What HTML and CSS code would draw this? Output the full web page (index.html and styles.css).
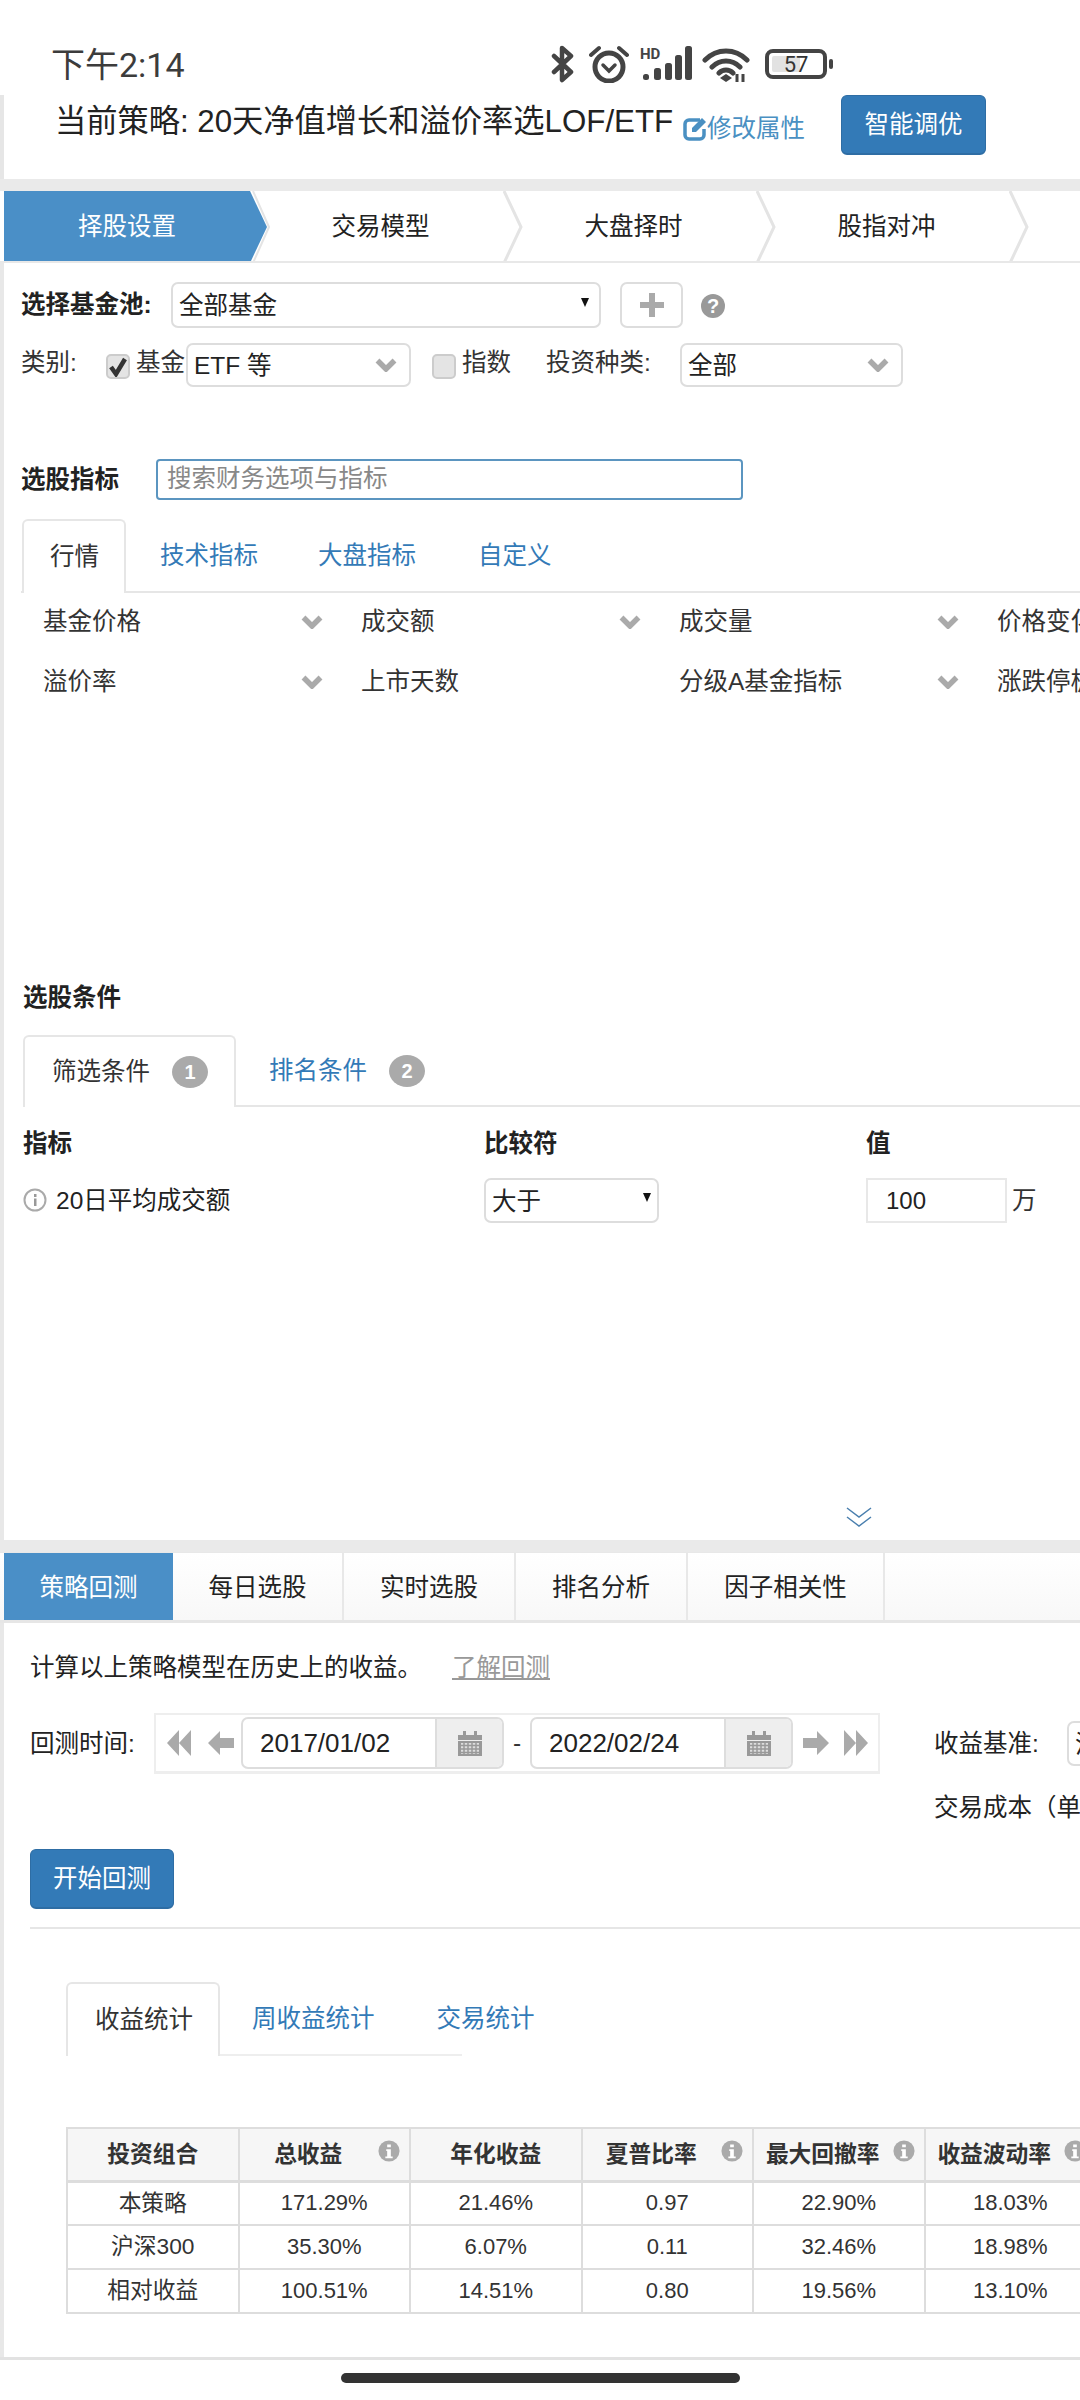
FILE: index.html
```html
<!DOCTYPE html>
<html lang="zh-CN">
<head>
<meta charset="utf-8">
<title>策略回测</title>
<link rel="stylesheet" href="styles.css">
</head>
<body>
<svg class="defs" width="0" height="0">
  <symbol id="chev" viewBox="0 0 22 14"><path d="M2.500 2.500 11 11 19.500 2.500" fill="none" stroke="#aaa" stroke-width="5.500"/></symbol>
  <symbol id="info" viewBox="0 0 24 24"><circle cx="12" cy="12" r="11.500" fill="#aaa"/><path d="M10 5h4v3h-4zM9 10h5v8h2v2H8v-2h2v-6H9z" fill="#fff"/></symbol>
  <symbol id="cal" viewBox="0 0 24 26"><path d="M0 5h5V1h3v4h8V1h3v4h5v5H0z" fill="#999"/><path d="M0 11h24v15H0z" fill="#999"/><path d="M3 13h18v11H3z" fill="#ddd"/><path d="M3 15.500h18M3 19h18M3 22.500h18M6 13v11M10 13v11M14 13v11M18 13v11" stroke="#999" stroke-width="1.500"/></symbol>
</svg>
<div class="page">
  <header class="status">
    <span class="time">下午2:14</span>
    <div class="status-icons">
      <svg class="i-bt" width="24" height="38" viewBox="0 0 24 38"><path d="M3 11 20 27 11 35V3l9 8L3 27" fill="none" stroke="#444" stroke-width="4.500" stroke-linejoin="round" stroke-linecap="round"/></svg>
      <svg class="i-alarm" width="40" height="38" viewBox="0 0 40 38"><circle cx="20" cy="22" r="14" fill="none" stroke="#444" stroke-width="5"/><path d="M14 20l6 6 6-6" fill="none" stroke="#444" stroke-width="3.500" stroke-linecap="round"/><path d="M2 10 10 3M38 10 30 3" stroke="#444" stroke-width="4" stroke-linecap="round"/></svg>
      <svg class="i-sig" width="52" height="36" viewBox="0 0 52 36"><text x="0" y="14" class="hd">HD</text><rect x="3" y="29" width="6" height="6" rx="2.500" fill="#444"/><rect x="14" y="23" width="7" height="12" rx="2.500" fill="#444"/><rect x="25" y="18" width="7" height="17" rx="2.500" fill="#444"/><rect x="35" y="10" width="7" height="25" rx="2.500" fill="#444"/><rect x="45" y="1" width="7" height="34" rx="2.500" fill="#444"/></svg>
      <svg class="i-wifi" width="48" height="36" viewBox="0 0 48 36"><path d="M3 13C15 1 33 1 45 13M10 20C18 12 30 12 38 20M17 26C21 22 27 22 31 26" fill="none" stroke="#444" stroke-width="5" stroke-linecap="round"/><path d="M18 31l6-4 6 4-6 4z" fill="#444"/><path d="M35 27v8M41 27v8" stroke="#444" stroke-width="3"/></svg>
      <svg class="i-bat" width="68" height="30" viewBox="0 0 68 30"><rect x="2" y="2" width="58" height="26" rx="6" fill="none" stroke="#444" stroke-width="4"/><rect x="7" y="7" width="28" height="16" rx="2" fill="#e2e2e2"/><text x="31" y="23" class="bat">57</text><rect x="64" y="10" width="4" height="10" rx="2" fill="#444"/></svg>
    </div>
  </header>

  <section class="head-bar">
    <h1 class="title">当前策略: 20天净值增长和溢价率选LOF/ETF</h1>
    <a class="edit">
      <svg width="24" height="24" viewBox="0 0 24 24"><path d="M17 3H6a4 4 0 0 0-4 4v11a4 4 0 0 0 4 4h11a4 4 0 0 0 4-4v-6" fill="none" stroke="#4a90c2" stroke-width="3.500"/><path d="M9 11 19 1l4 4-10 10H9z" fill="#4a90c2"/></svg>修改属性</a>
    <button class="btn btn-tune">智能调优</button>
  </section>

  <div class="band"></div>

  <nav class="steps">
    <div class="step active">择股设置<svg class="step-tip" width="20" height="72" viewBox="0 0 20 72"><path d="M0 0 17 36 0 72z" fill="#4a8fc7"/><path d="M3 0 19 36 3 72" fill="none" stroke="#e4e4e4" stroke-width="2"/></svg></div>
    <div class="step">交易模型<svg class="step-tip" width="20" height="72" viewBox="0 0 20 72"><path d="M1 0 18 36 1 72" fill="none" stroke="#e4e4e4" stroke-width="3"/></svg></div>
    <div class="step">大盘择时<svg class="step-tip" width="20" height="72" viewBox="0 0 20 72"><path d="M1 0 18 36 1 72" fill="none" stroke="#e4e4e4" stroke-width="3"/></svg></div>
    <div class="step">股指对冲<svg class="step-tip" width="20" height="72" viewBox="0 0 20 72"><path d="M1 0 18 36 1 72" fill="none" stroke="#e4e4e4" stroke-width="3"/></svg></div>
  </nav>

  <section class="panel">
    <div class="row row-pool">
      <strong class="lbl-pool">选择基金池:</strong>
      <div class="sel sel-pool"><span>全部基金</span><i class="caret"></i></div>
      <button class="plus"><svg width="24" height="24" viewBox="0 0 24 24"><path d="M9 0h6v9h9v6h-9v9H9v-9H0V9h9z" fill="#aaa"/></svg></button>
      <svg class="qmark" width="24" height="24" viewBox="0 0 24 24"><circle cx="12" cy="12" r="12" fill="#999"/><text x="12" y="19" class="q">?</text></svg>
    </div>
    <div class="row row-kind">
      <span class="lbl-kind">类别:</span>
      <span class="check on"><svg width="20" height="20" viewBox="0 0 20 20"><path d="M3 10l5 7L17 2" fill="none" stroke="#333" stroke-width="4.500"/></svg></span>
      <span class="kind-a">基金</span>
      <div class="sel sel-etf"><span>ETF 等</span><svg class="chev"><use href="#chev"/></svg></div>
      <span class="check"></span>
      <span class="kind-b">指数</span>
      <span class="kind-c">投资种类:</span>
      <div class="sel sel-all"><span>全部</span><svg class="chev"><use href="#chev"/></svg></div>
    </div>
    <div class="row row-search">
      <strong class="lbl-search">选股指标</strong>
      <div class="search">搜索财务选项与指标</div>
    </div>
    <div class="tabs tabs-a">
      <a class="tab cur">行情</a><a class="tab">技术指标</a><a class="tab">大盘指标</a><a class="tab">自定义</a>
    </div>
    <div class="factor-grid">
      <div class="factor"><span>基金价格</span><svg class="chev"><use href="#chev"/></svg></div>
      <div class="factor"><span>成交额</span><svg class="chev"><use href="#chev"/></svg></div>
      <div class="factor"><span>成交量</span><svg class="chev"><use href="#chev"/></svg></div>
      <div class="factor"><span>价格变化</span></div>
      <div class="factor"><span>溢价率</span><svg class="chev"><use href="#chev"/></svg></div>
      <div class="factor"><span>上市天数</span></div>
      <div class="factor"><span>分级A基金指标</span><svg class="chev"><use href="#chev"/></svg></div>
      <div class="factor"><span>涨跌停板</span></div>
    </div>
  </section>

  <section class="panel panel-cond">
    <strong class="cond-title">选股条件</strong>
    <div class="tabs tabs-b">
      <a class="tab cur">筛选条件<b class="badge">1</b></a><a class="tab">排名条件<b class="badge">2</b></a>
    </div>
    <div class="cond-row cond-head">
      <strong class="c1">指标</strong><strong class="c2">比较符</strong><strong class="c3">值</strong>
    </div>
    <div class="cond-row cond-body">
      <div class="c1 c1-body"><svg width="24" height="24" viewBox="0 0 24 24"><circle cx="12" cy="12" r="10.500" fill="none" stroke="#aaa" stroke-width="2"/><path d="M11 6h2.500v3H11zM11 10.500h2.500V18H11z" fill="#999"/></svg>20日平均成交额</div>
      <div class="c2"><div class="sel sel-cmp"><span>大于</span><i class="caret"></i></div></div>
      <div class="c3 c3-body"><div class="num">100</div><span>万</span></div>
    </div>
    <svg class="more" width="26" height="20" viewBox="0 0 26 20"><path d="M1 1 13 10 25 1M1 10 13 19 25 10" fill="none" stroke="#4a7fae" stroke-width="1.500"/></svg>
  </section>

  <div class="band"></div>

  <nav class="btabs">
    <a class="btab active">策略回测</a><a class="btab">每日选股</a><a class="btab">实时选股</a><a class="btab">排名分析</a><a class="btab wide">因子相关性</a><span class="btab-rest"></span>
  </nav>

  <section class="panel panel-back">
    <p class="intro">计算以上策略模型在历史上的收益。<a class="learn">了解回测</a></p>
    <div class="date-row">
      <span class="date-lbl">回测时间:</span>
      <div class="date-box">
        <svg class="arrow" width="24" height="26" viewBox="0 0 24 26"><path d="M12 0v26L0 13zM24 0v26L12 13z" fill="#aaa"/></svg>
        <svg class="arrow a2" width="26" height="24" viewBox="0 0 26 24"><path d="M12 0 0 12l12 12v-7h14V7H12z" fill="#aaa"/></svg>
        <div class="date"><span class="date-val">2017/01/02</span><span class="date-cal"><svg width="24" height="26"><use href="#cal"/></svg></span></div>
        <span class="dash">-</span>
        <div class="date"><span class="date-val">2022/02/24</span><span class="date-cal"><svg width="24" height="26"><use href="#cal"/></svg></span></div>
        <svg class="arrow a3" width="26" height="24" viewBox="0 0 26 24"><path d="M14 0l12 12-12 12v-7H0V7h14z" fill="#aaa"/></svg>
        <svg class="arrow a4" width="24" height="26" viewBox="0 0 24 26"><path d="M0 0v26l12-13zM12 0v26l12-13z" fill="#aaa"/></svg>
      </div>
      <span class="base-lbl">收益基准:</span>
      <div class="sel sel-base"><span>沪深300</span></div>
    </div>
    <div class="cost">交易成本（单边）</div>
    <button class="btn btn-run">开始回测</button>
    <hr class="rule">
    <div class="tabs tabs-c">
      <a class="tab cur">收益统计</a><a class="tab">周收益统计</a><a class="tab">交易统计</a>
    </div>
    <table class="stats">
      <thead>
        <tr>
          <th>投资组合</th>
          <th class="has-i"><span>总收益</span><svg class="th-i"><use href="#info"/></svg></th>
          <th>年化收益</th>
          <th class="has-i"><span>夏普比率</span><svg class="th-i"><use href="#info"/></svg></th>
          <th class="has-i"><span>最大回撤率</span><svg class="th-i"><use href="#info"/></svg></th>
          <th class="has-i"><span>收益波动率</span><svg class="th-i"><use href="#info"/></svg></th>
        </tr>
      </thead>
      <tbody>
        <tr><td>本策略</td><td>171.29%</td><td>21.46%</td><td>0.97</td><td>22.90%</td><td>18.03%</td></tr>
        <tr><td>沪深300</td><td>35.30%</td><td>6.07%</td><td>0.11</td><td>32.46%</td><td>18.98%</td></tr>
        <tr><td>相对收益</td><td>100.51%</td><td>14.51%</td><td>0.80</td><td>19.56%</td><td>13.10%</td></tr>
      </tbody>
    </table>
  </section>

  <footer class="foot"><span class="home"></span></footer>
</div>
</body>
</html>
```

FILE: styles.css
```css
* { box-sizing: border-box; }
html, body { margin: 0; padding: 0; background: #fff; }
body {
  width: 1080px;
  height: 2400px;
  overflow: hidden;
  font-family: "Liberation Sans", "Noto Sans CJK SC", sans-serif;
  font-size: 24.5px;
  line-height: 1.2;
  color: #333;
}
a { color: #337ab7; text-decoration: none; }
.defs { position: absolute; }
.page { width: 1080px; height: 2400px; overflow: hidden; }

.status { height: 95px; display: flex; align-items: flex-start; justify-content: space-between; padding: 44px 247px 0 51px; }
.time { font-family: "Roboto", "Noto Sans CJK SC", sans-serif; font-size: 34px; line-height: 42px; color: #3c3c3c; white-space: nowrap; }
.status-icons { display: flex; align-items: flex-start; }
.i-bt { margin-top: 1px; }
.i-alarm { margin: 1px 0 0 14px; }
.i-sig { margin: 1px 0 0 11px; }
.i-wifi { margin: 3px 0 0 10px; }
.i-bat { margin: 5px 0 0 15px; }
.hd { font: 700 15px "Roboto", sans-serif; fill: #444; }
.bat { font: 400 22px "Roboto", sans-serif; fill: #333; text-anchor: middle; }
.q { font: 700 20px "Liberation Sans", sans-serif; fill: #fff; text-anchor: middle; }

.head-bar { height: 84px; border-left: 4px solid #e6e6e6; display: flex; align-items: flex-start; padding-left: 51px; }
.title { margin: 8px 0 0; font-size: 31.25px; font-weight: 400; line-height: 38px; color: #222; white-space: nowrap; }
.edit { display: flex; align-items: center; margin: 19px 0 0 10px; color: #4a90c2; font-size: 24.5px; line-height: 30px; }
.btn { display: block; border: 1px solid #2e6da4; border-bottom-width: 2px; border-radius: 6px; background: #337ab7; color: #fff; font: inherit; font-size: 24.5px; padding: 0; }
.btn-tune { width: 145px; height: 60px; margin-left: 36px; }

.band { height: 12px; background: #eaeaea; }
.steps { height: 72px; display: flex; padding-left: 4px; border-bottom: 2px solid #e8e8e8; overflow: hidden; }
.step { position: relative; width: 253px; height: 70px; flex: none; padding-left: 8px; text-align: center; line-height: 72px; color: #222; }
.step:first-child { width: 246px; padding-left: 0; }
.step.active { background: #4a8fc7; color: #fff; }
.step-tip { position: absolute; left: 100%; top: 0; }

.panel { border-left: 4px solid #e8e8e8; padding-left: 17px; }
.row { display: flex; align-items: center; }
.row-pool { padding-top: 19px; height: 65px; }
.lbl-pool { width: 150px; font-weight: 700; color: #222; white-space: nowrap; }
.sel { display: flex; align-items: center; justify-content: space-between; border: 2px solid #ddd; border-radius: 7px; background: #fff; padding: 0 6px; color: #222; flex: none; }
.sel span { margin-top: 2px; }
.sel-pool { width: 430px; height: 46px; padding-right: 10px; }
.caret { width: 0; height: 0; border-left: 4px solid transparent; border-right: 4px solid transparent; border-top: 9px solid #111; margin-top: -6px; }
.plus { width: 63px; height: 46px; margin-left: 19px; border: 2px solid #ddd; border-radius: 7px; background: #fff; padding: 0; display: flex; align-items: center; justify-content: center; flex: none; }
.qmark { margin: 2px 0 0 18px; flex: none; }
.row-kind { height: 44px; margin-top: 15px; }
.lbl-kind { width: 85px; flex: none; margin-top: -4px; }
.check { width: 24px; height: 25px; border: 2px solid #ccc; border-radius: 5px; background: #e4e4e4; display: flex; align-items: center; justify-content: center; flex: none; margin-top: 3px; }
.kind-a { width: 56px; padding-left: 6px; flex: none; margin-top: -4px; white-space: nowrap; }
.sel-etf { width: 225px; height: 44px; margin-right: 21px; padding-right: 12px; }
.kind-b { margin: -4px 0 0 6px; width: 84px; flex: none; }
.kind-c { width: 134px; flex: none; margin-top: -4px; white-space: nowrap; }
.sel-all { width: 223px; height: 44px; padding-right: 12px; }
.chev { width: 22px; height: 14px; flex: none; }
.row-search { height: 41px; margin-top: 72px; }
.lbl-search { width: 135px; font-weight: 700; color: #222; flex: none; }
.search { width: 587px; height: 41px; border: 2px solid #5b95c0; border-radius: 4px; padding: 0 9px; line-height: 35px; color: #888; }
.tabs { display: flex; border-bottom: 2px solid #e6e6e6; }
.tabs-a { margin-top: 19px; height: 74px; padding-left: 1px; }
.tab { display: flex; align-items: center; height: 74px; padding: 0 34px; flex: none; white-space: nowrap; }
.tab.cur { background: #fff; border: 2px solid #e6e6e6; border-bottom: 0; border-radius: 6px 6px 0 0; color: #333; padding: 0 28px; margin-bottom: -2px; }
.tabs-a .tab { padding-left: 30px; padding-right: 30px; }
.tabs-a .tab.cur { width: 104px; padding: 0 0 0 26px; }
.tabs-a .tab:nth-child(2) { padding-left: 34px; padding-right: 30px; }
.tabs-a .tab:nth-child(3) { padding-left: 30px; padding-right: 32px; }
.factor-grid { display: grid; grid-template-columns: repeat(4, 318px); grid-auto-rows: 60px; margin: -1px 0 0 1px; height: 391px; }
.factor { display: flex; align-items: center; justify-content: space-between; padding: 0 17px 0 21px; white-space: nowrap; overflow: hidden; }

.panel-cond { height: 557px; position: relative; padding-left: 19px; }
.cond-title { display: block; font-weight: 700; color: #222; line-height: 30px; }
.tabs-b { margin-top: 22px; height: 72px; }
.tabs-b .tab { height: 72px; padding: 0 33px; }
.tabs-b .tab.cur { width: 213px; padding: 0 0 0 27px; }
.badge { display: inline-block; width: 36px; height: 32px; margin-left: 22px; border-radius: 50%; background: #aaa; color: #fff; text-align: center; font-size: 20px; line-height: 32px; }
.cond-row { display: flex; }
.cond-head { margin-top: 22px; height: 30px; align-items: center; }
.cond-head strong { font-weight: 700; color: #222; }
.c1 { width: 461px; flex: none; }
.c2 { width: 382px; flex: none; }
.c3 { flex: none; }
.cond-body { margin-top: 19px; align-items: center; }
.c1-body { display: flex; align-items: center; gap: 9px; color: #222; white-space: nowrap; }
.sel-cmp { width: 175px; height: 45px; }
.c3-body { display: flex; align-items: center; gap: 5px; }
.num { width: 141px; height: 45px; border: 2px solid #e8e8e8; padding-left: 18px; font-size: 24px; line-height: 41px; color: #222; }
.more { position: absolute; left: 842px; top: 524px; }

.btabs { height: 71px; display: flex; padding-left: 4px; border-bottom: 3px solid #e6e6e6; border-top: 1px solid #e8e8e8; background: linear-gradient(#fff, #f8f8f8); overflow: hidden; }
.btab { width: 172px; flex: none; text-align: center; line-height: 70px; color: #222; border-right: 2px solid #e8e8e8; }
.btab.active { width: 169px; background: #4a8fc7; color: #fff; border-right: 0; }
.btab:nth-child(2) { width: 171px; }
.btab.wide { width: 197px; }
.panel-back { padding-left: 26px; height: 734px; }
.intro { margin: 0; padding-top: 30px; line-height: 30px; color: #222; white-space: nowrap; }
.learn { margin-left: 30px; color: #999; text-decoration: underline; }
.date-row { display: flex; align-items: center; margin-top: 30px; height: 61px; white-space: nowrap; }
.date-lbl { width: 124px; flex: none; color: #222; }
.date-box { width: 726px; height: 61px; border: 2px solid #eee; border-bottom-width: 3px; display: flex; align-items: center; padding-left: 11px; flex: none; }
.arrow { flex: none; }
.a2 { margin: 0 7px 0 17px; }
.date { width: 263px; height: 52px; flex: none; display: flex; border: 2px solid #ddd; border-radius: 7px; }
.date-val { width: 192px; padding-left: 17px; line-height: 48px; color: #222; font-size: 26px; }
.date-cal { flex: 1; background: #eee; border-left: 2px solid #ddd; display: flex; align-items: center; justify-content: center; border-radius: 0 5px 5px 0; }
.dash { width: 26px; text-align: center; flex: none; }
.a3 { margin-left: 10px; }
.a4 { margin-left: 15px; }
.base-lbl { margin-left: 54px; width: 133px; flex: none; color: #222; }
.sel-base { width: 200px; height: 45px; overflow: hidden; justify-content: flex-start; }
.cost { margin: 19px 0 0 904px; line-height: 30px; white-space: nowrap; color: #222; }
.btn-run { width: 144px; height: 60px; margin-top: 26px; }
.rule { border: 0; height: 2px; background: #e6e6e6; margin: 18px 0 0; width: 1100px; }
.tabs-c { margin: 53px 0 0 36px; width: 396px; height: 74px; border-bottom: 2px solid #eee; }
.tabs-c .tab { padding: 0 31px; }
.tabs-c .tab.cur { width: 154px; padding: 0 0 0 27px; }
.tabs-c .tab:nth-child(2) { padding-left: 32px; }
.stats { border-collapse: collapse; table-layout: fixed; width: 1029px; margin: 71px 0 0 36px; color: #333; }
.stats th, .stats td { border: 2px solid #ddd; padding: 0; text-align: center; width: 171.5px; font-size: 22px; }
.stats th { height: 53px; background: #f6f6f6; font-size: 22.75px; font-weight: 700; border-bottom-width: 3px; position: relative; }
.stats td { height: 44px; }
.stats td:first-child { font-size: 22.75px; }
.has-i span { display: inline-block; padding-right: 32px; white-space: nowrap; }
.th-i { position: absolute; right: 9px; top: 11px; width: 22px; height: 22px; }
.foot { height: 43px; border-top: 3px solid #e2e2e2; display: flex; justify-content: center; padding-top: 13px; }
.home { width: 399px; height: 10px; border-radius: 5px; background: #333; }
```
